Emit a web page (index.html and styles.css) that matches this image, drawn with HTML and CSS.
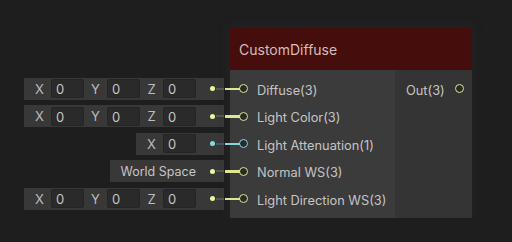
FILE: index.html
```html
<!DOCTYPE html>
<html lang="en">
<head>
    <meta charset="UTF-8">
    <title>CustomDiffuse</title>
    <link rel="stylesheet" href="styles.css">
</head>
<body>
    <div class="graph">
        <!-- valeurs par défaut branchées à gauche du noeud -->
        <div class="defaults">
            <div class="slot-row">
                <div class="field-box">
                    <span class="axis">X</span><span class="field">0</span>
                    <span class="axis">Y</span><span class="field">0</span>
                    <span class="axis">Z</span><span class="field">0</span>
                    <span class="plug"><i class="dot"></i><i class="stub"></i></span>
                </div>
            </div>
            <div class="slot-row">
                <div class="field-box">
                    <span class="axis">X</span><span class="field">0</span>
                    <span class="axis">Y</span><span class="field">0</span>
                    <span class="axis">Z</span><span class="field">0</span>
                    <span class="plug"><i class="dot"></i><i class="stub"></i></span>
                </div>
            </div>
            <div class="slot-row">
                <div class="field-box">
                    <span class="axis">X</span><span class="field">0</span>
                    <span class="plug float"><i class="dot"></i><i class="stub"></i></span>
                </div>
            </div>
            <div class="slot-row">
                <div class="field-box">
                    <span class="space">World Space</span>
                    <span class="plug"><i class="dot"></i><i class="stub"></i></span>
                </div>
            </div>
            <div class="slot-row">
                <div class="field-box">
                    <span class="axis">X</span><span class="field">0</span>
                    <span class="axis">Y</span><span class="field">0</span>
                    <span class="axis">Z</span><span class="field">0</span>
                    <span class="plug"><i class="dot"></i><i class="stub"></i></span>
                </div>
            </div>
        </div>

        <div class="node">
            <div class="node-title">CustomDiffuse</div>
            <div class="node-body">
                <div class="inputs">
                    <div class="port-row"><i class="port wired"></i><span class="label">Diffuse(3)</span></div>
                    <div class="port-row"><i class="port wired"></i><span class="label">Light Color(3)</span></div>
                    <div class="port-row"><i class="port wired float"></i><span class="label">Light Attenuation(1)</span></div>
                    <div class="port-row"><i class="port wired"></i><span class="label">Normal WS(3)</span></div>
                    <div class="port-row"><i class="port wired"></i><span class="label">Light Direction WS(3)</span></div>
                </div>
                <div class="outputs">
                    <div class="port-row out"><span class="label">Out(3)</span><i class="port"></i></div>
                </div>
            </div>
        </div>
    </div>
</body>
</html>
```

FILE: styles.css
```css
body { margin: 0; background-color: #1e1e1e; font-family: Inter, "Noto Sans", sans-serif; color: #c4c4c4; }
.graph { display: flex; gap: 6px; padding: 28px 0 0 24px; }

.defaults { width: 200px; margin-top: 47px; display: flex; flex-direction: column; align-items: flex-end; }
.slot-row { height: 27.5px; display: flex; align-items: center; }
.field-box { display: flex; align-items: center; height: 22px; padding-left: 4px; background-color: #383838; font-size: 13px; }
.axis { width: 23px; text-align: center; color: #bdbdbd; }
.field { width: 33px; height: 19px; box-sizing: border-box; padding-left: 4px; line-height: 18px; background-color: #2a2a2a; border: 1px solid #252525; border-radius: 2px; }
.space { padding-left: 6px; font-size: 12.5px; color: #c4c4c4; }
.plug { width: 28px; display: flex; align-items: center; padding-left: 14px; box-sizing: border-box; }
.dot { width: 5px; height: 5px; border-radius: 50%; background-color: #eef5a0; flex: none; }
.stub { flex: 1; height: 2px; margin-left: 1px; background-color: #56584a; }
.plug.float .dot { background-color: #86dcdf; }
.plug.float .stub { background-color: #48595a; }

.node { width: 242px; height: 190px; display: flex; flex-direction: column; box-shadow: 0 0 10px 2px rgba(60, 60, 60, 0.18); }
.node-title { height: 42px; flex: none; display: flex; align-items: center; padding-left: 9px; background-color: #450e0d; color: #d6bcb7; font-size: 14px; }
.node-body { flex: 1; display: flex; }
.inputs { width: 165px; padding: 5px 0 4.5px; background-color: #3b3b3b; }
.outputs { flex: 1; padding: 5px 0 4.5px; background-color: #343434; }
.port-row { height: 27.5px; display: flex; align-items: center; padding-left: 9px; font-size: 12.8px; }
.port-row .label { padding-top: 3px; }
.port-row.out { padding-left: 11px; }
.port { position: relative; width: 9px; height: 9px; box-sizing: border-box; border: 1.5px solid #dfe68e; border-radius: 50%; background-color: #2a2a2a; margin-right: 9px; flex: none; }
.port-row.out .port { margin: 0 0 0 10px; }
.port.wired::before { content: ""; position: absolute; right: 100%; top: 50%; width: 15px; height: 2.5px; margin-top: -1.25px; background-color: #dfe68e; }
.port.float { border-color: #86d6d9; }
.port.float::before { background-color: #86d6d9; }
```
